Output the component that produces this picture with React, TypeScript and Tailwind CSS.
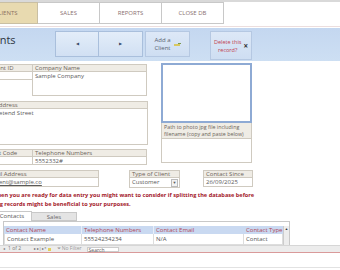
import React from 'react';

const Label = ({ text, className = '' }: { text: string; className?: string }) => (
  <div className={`h-[8px] bg-[#efece5] border border-[#cfcac0] text-[6px] leading-[6px] px-[2px] text-[#6b6259] whitespace-nowrap overflow-hidden ${className}`}>
    {text}
  </div>
);

const Value = ({ text, className = '' }: { text?: string; className?: string }) => (
  <div className={`bg-white border border-[#cfcac0] border-t-0 text-[6px] leading-[8px] px-[2px] text-[#5a5a5a] whitespace-nowrap overflow-hidden ${className}`}>
    {text}
  </div>
);

export default function App() {
  return (
    <div className="w-[340px] h-[270px] overflow-hidden bg-white font-['Open_Sans',sans-serif] text-[#555]">
      {/* menu tabs */}
      <div className="h-[2px] bg-[#d9d9d9]" />
      <div className="flex h-[22px]">
        <div className="ml-[-26px] w-[64px] shrink-0 bg-[#e8dab0] border border-[#c9bfa3] flex items-center justify-center text-[6px] text-[#8a7060]">CLIENTS</div>
        {['SALES', 'REPORTS', 'CLOSE DB'].map((t) => (
          <div key={t} className="w-[62px] shrink-0 bg-white border border-l-0 border-[#c8c8c8] flex items-center justify-center text-[6px] text-[#8a7070]">
            {t}
          </div>
        ))}
      </div>
      <div className="h-[2px]" />
      <div className="h-[1px] bg-[#ecdede]" />

      {/* header band */}
      <div className="h-[33px] mt-[1px] bg-gradient-to-b from-[#c4d7f0] to-[#cddff3] flex items-start">
        <div className="ml-[-19px] mt-[6px] text-[11px] leading-[12px] text-[#2d3440] w-[70px] shrink-0">Clients</div>
        <div className="ml-[4px] mt-[3px] flex h-[26px]">
          <button className="w-[44px] border border-[#a9bfdc] bg-gradient-to-b from-[#e3edf9] to-[#d1e0f3] flex items-center justify-center">
            <span className="text-[4px] text-[#3a4a6a]">◀</span>
          </button>
          <button className="w-[44px] border border-l-0 border-[#a9bfdc] bg-gradient-to-b from-[#e3edf9] to-[#d1e0f3] flex items-center justify-center">
            <span className="text-[4px] text-[#3a4a6a]">▶</span>
          </button>
        </div>
        <button className="ml-[2px] mt-[3px] w-[45px] h-[26px] border border-[#b5c8e2] bg-gradient-to-b from-[#dde8f7] to-[#cedef2] flex items-center justify-center gap-[3px]">
          <span className="text-[6px] leading-[8px] text-[#5a6270] text-center">Add a<br />Client</span>
          <svg width="7" height="5" viewBox="0 0 7 5">
            <rect x="0" y="2" width="6" height="2" fill="#d8c860" />
            <rect x="4" y="1" width="3" height="1" fill="#7a9a50" />
          </svg>
        </button>
        <button className="ml-[20px] mt-[3px] w-[42px] h-[29px] border border-[#b5c8e2] bg-gradient-to-b from-[#dde8f7] to-[#cedef2] flex items-center justify-center gap-[2px]">
          <span className="text-[5.5px] leading-[8px] text-[#c04050] text-center">Delete this<br />record?</span>
          <span className="text-[8px] leading-[8px] text-[#333] font-bold">×</span>
        </button>
      </div>

      {/* form */}
      <div className="flex mt-[3px]">
        <div className="ml-[-14px] w-[162px] shrink-0 flex flex-col">
          <div className="flex">
            <div className="w-[47px]">
              <Label text="Client ID" className="pl-[3px]" />
              <Value className="h-[8px]" />
            </div>
            <div className="w-[115px] ml-[-1px]">
              <Label text="Company Name" />
              <Value className="h-[24px]" text="Sample Company" />
            </div>
          </div>
          <div className="mt-[5px]">
            <Label text="Address" className="h-[7px] leading-[5px] pl-[8px]" />
            <Value className="h-[36px] pl-[6px]" text="Pretend Street" />
          </div>
          <div className="flex mt-[4px]">
            <div className="w-[47px]">
              <Label text="Post Code" />
              <Value className="h-[8px]" />
            </div>
            <div className="w-[115px] ml-[-1px]">
              <Label text="Telephone Numbers" />
              <Value className="h-[8px]" text="5552332#" />
            </div>
          </div>
        </div>
        <div className="ml-[13px] w-[91px] shrink-0 mt-[-1px] flex flex-col">
          <div className="h-[60px] border-2 border-[#8eaad4] bg-white" />
          <div className="h-[16px] bg-[#efece5] border border-[#cfcac0] border-t-0 text-[5.3px] leading-[7px] px-[2px] pt-[1px] text-[#6b6259]">
            Path to photo jpg file including filename (copy and paste below)
          </div>
          <div className="h-[24px] bg-white border border-[#cfcac0] border-t-0" />
        </div>
      </div>

      {/* email row */}
      <div className="flex mt-[5px]">
        <div className="ml-[-14px] w-[113px] shrink-0">
          <Label text="Email Address" className="h-[7px] leading-[5px] pl-[0px]" />
          <Value className="h-[9px] text-[#3b5fc0] underline pl-[6px]" text="client@sample.co" />
        </div>
        <div className="ml-[30px] w-[51px] shrink-0">
          <Label text="Type of Client" className="h-[7px] leading-[5px]" />
          <div className="h-[10px] bg-white border border-[#cfcac0] border-t-0 flex items-center justify-between text-[6px] pl-[2px] text-[#5a5a5a]">
            <span>Customer</span>
            <span className="w-[7px] h-[8px] border border-[#bbb] bg-[#f3f3f3] flex items-center justify-center text-[4px] mr-[1px]">▼</span>
          </div>
        </div>
        <div className="ml-[23px] w-[50px] shrink-0">
          <Label text="Contact Since" className="h-[7px] leading-[5px]" />
          <Value className="h-[9px]" text="26/09/2025" />
        </div>
      </div>

      {/* note */}
      <div className="mt-[3px] text-[5.6px] leading-[8.5px] font-bold text-[#a3202a] whitespace-nowrap">
        <div className="ml-[-8px]">When you are ready for data entry you might want to consider if splitting the database before</div>
        <div className="ml-[-21px]">entering records might be beneficial to your purposes.</div>
      </div>

      {/* subform tabs */}
      <div className="flex mt-[3px] h-[10px]">
        <div className="ml-[-8px] w-[40px] border border-b-0 border-[#c8c8c8] bg-white text-[6px] leading-[9px] text-center text-[#555]">Contacts</div>
        <div className="w-[45px] mt-[1px] border border-l-0 border-[#c8c8c8] bg-[#e4e4e4] text-[6px] leading-[8px] text-center text-[#666]">Sales</div>
      </div>
      <div className="ml-[3px] w-[287px] h-[24px] border border-[#c8c8c8] pt-[4px] pr-[6px] relative">
        <div className="flex h-[8px] bg-[#c9d9f1] text-[6px] leading-[8px] text-[#b04858]">
          <div className="w-[78px] pl-[2px] border-r border-[#e8eef8]">Contact Name</div>
          <div className="w-[72px] pl-[2px] border-r border-[#e8eef8]">Telephone Numbers</div>
          <div className="w-[90px] pl-[2px]">Contact Email</div>
          <div className="flex-1 pl-[2px]">Contact Type</div>
        </div>
        <div className="flex h-[11px] text-[6px] leading-[10px] text-[#555] border-b border-[#ddd]">
          <div className="w-[78px] pl-[2px] border-r border-l border-[#ddd]">Contact Example</div>
          <div className="w-[72px] pl-[2px] border-r border-[#ddd]">55524234234</div>
          <div className="w-[90px] pl-[2px] border-r border-[#ddd]">N/A</div>
          <div className="flex-1 pl-[2px] border-r border-[#ddd]">Contact</div>
        </div>
        <div className="absolute right-[0px] top-[4px] w-[6px] h-[19px] bg-[#ededed] border-l border-[#ccc] flex justify-center">
          <span className="text-[3.5px] leading-[6px] text-[#333]">▲</span>
        </div>
      </div>

      {/* record nav */}
      <div className="h-[7px] bg-[#ececec] border-t border-[#d6d6d6] flex items-center text-[5px] text-[#777] whitespace-nowrap">
        <span className="ml-[3px] text-[4px]">◂</span>
        <span className="ml-[3px]">1 of 2</span>
        <span className="ml-[13px] text-[4px] text-[#666]">▸ ▸| ▸*</span>
        <span className="ml-[1px] w-[3px] h-[3px] bg-[#e3cf5a]" />
        <span className="ml-[6px] text-[#999]">⏷ No Filter</span>
        <span className="ml-[5px] w-[32px] h-[5px] bg-white border border-[#ccc] leading-[4px] pl-[1px] text-[#666]">Search</span>
      </div>
      <div className="h-[1px] bg-[#d99a9a]" />
      <div className="h-[14px]" />
      <div className="h-[1px] bg-[#e2e2e2]" />
    </div>
  );
}
